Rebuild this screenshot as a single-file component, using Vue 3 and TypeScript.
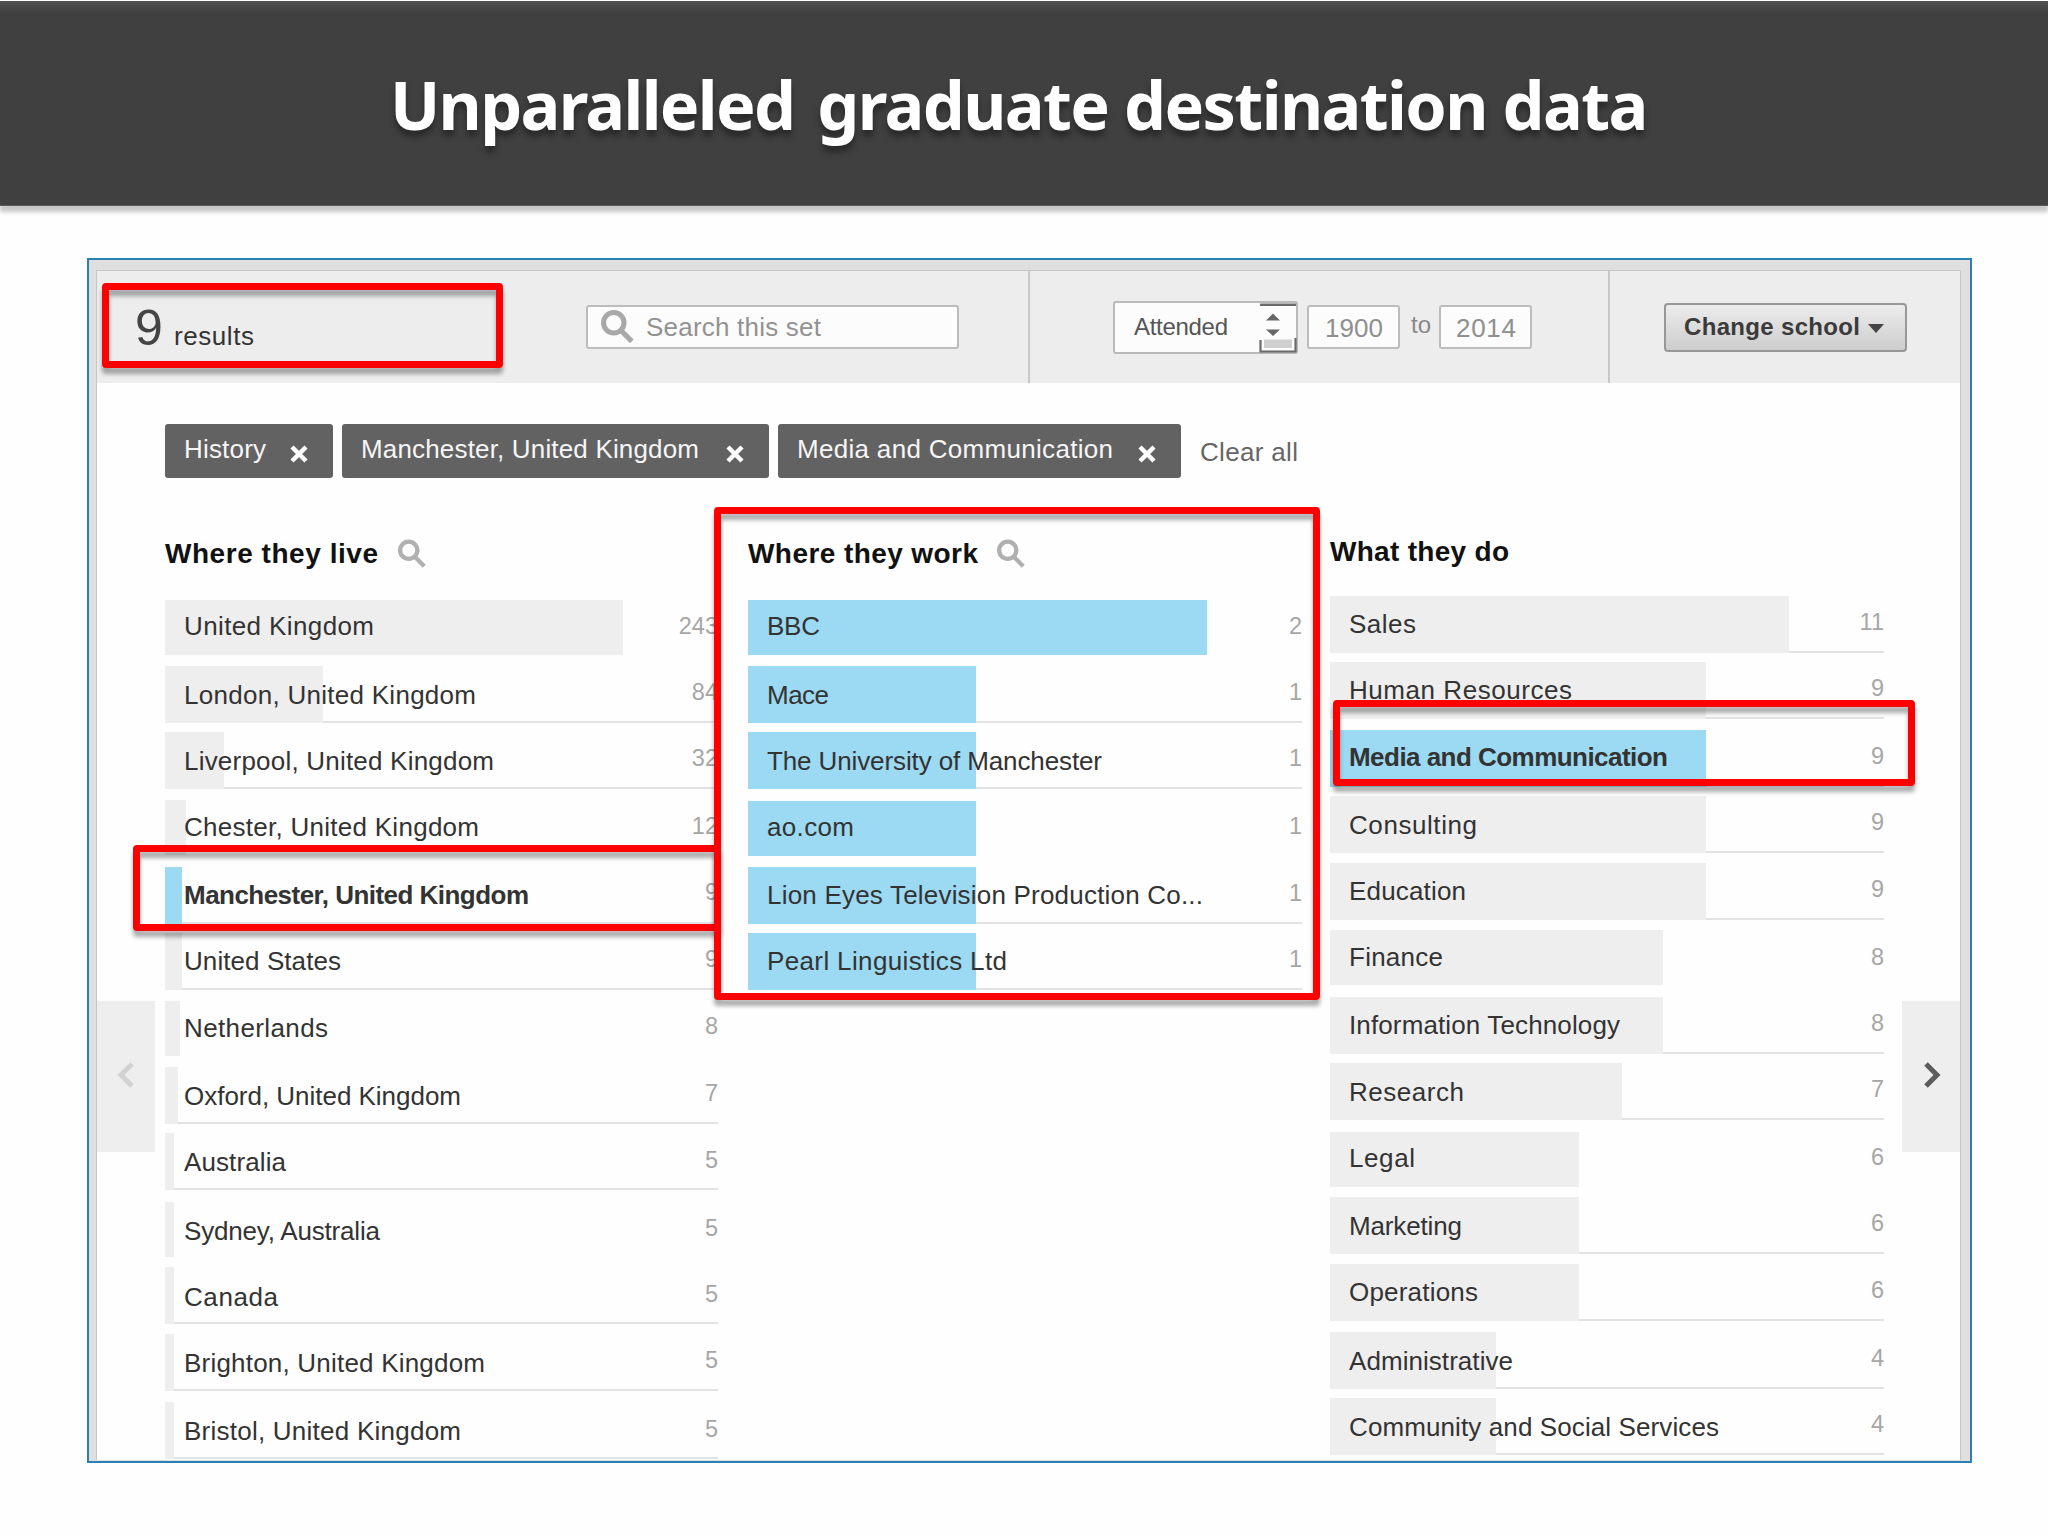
<script setup lang="ts">
interface Row {
  label: string
  textWidth: number
  count: number
  top: number
  bar: number
  base: number
  countBase: number
  line: boolean
  active?: boolean
}
interface Column {
  title: string
  titleWidth: number
  search: boolean
  titleBase: number
  start: number
  blue: boolean
  rows: Row[]
}

const r = (
  label: string, textWidth: number, count: number, top: number, bar: number,
  base: number, countBase: number, line = true, active = false,
): Row => ({ label, textWidth, count, top, bar, base, countBase, line, active })

const columns: Column[] = [
  {
    title: 'Where they live', titleWidth: 213, search: true, titleBase: 564, start: 600, blue: false,
    rows: [
      r('United Kingdom', 192, 243, 600, 458, 635.6, 634, false),
      r('London, United Kingdom', 294, 84, 666, 158, 704, 699.5),
      r('Liverpool, United Kingdom', 312, 32, 732, 59, 770, 766),
      r('Chester, United Kingdom', 297, 12, 800, 21, 836.6, 834, false),
      r('Manchester, United Kingdom', 347, 9, 867, 17, 904.6, 900, true, true),
      r('United States', 159, 9, 933, 17, 970.6, 967),
      r('Netherlands', 146, 8, 1001, 15, 1037, 1034, false),
      r('Oxford, United Kingdom', 279, 7, 1067, 12.5, 1105.5, 1101),
      r('Australia', 104, 5, 1133, 8.5, 1171.5, 1167.5),
      r('Sydney, Australia', 198, 5, 1202, 8.5, 1240, 1236, false),
      r('Canada', 96, 5, 1267, 8.5, 1306, 1302),
      r('Brighton, United Kingdom', 303, 5, 1334, 8.5, 1372.5, 1368),
      r('Bristol, United Kingdom', 279, 5, 1402, 8.5, 1440.5, 1437),
    ],
  },
  {
    title: 'Where they work', titleWidth: 230, search: true, titleBase: 564, start: 600, blue: true,
    rows: [
      r('BBC', 55, 2, 600, 459, 635.6, 634, false),
      r('Mace', 64, 1, 666, 228, 704, 700),
      r('The University of Manchester', 337, 1, 732, 228, 770, 766),
      r('ao.com', 89, 1, 801, 228, 836, 834, false),
      r('Lion Eyes Television Production Co...', 438, 1, 867, 228, 904.6, 901),
      r('Pearl Linguistics Ltd', 242, 1, 933, 228, 970.6, 967),
    ],
  },
  {
    title: 'What they do', titleWidth: 179, search: false, titleBase: 562, start: 596, blue: false,
    rows: [
      r('Sales', 69, 11, 596, 459, 633.6, 629.5),
      r('Human Resources', 225, 9, 662, 376, 699.6, 695.5),
      r('Media and Communication', 321, 9, 730, 376, 766, 764, true, true),
      r('Consulting', 130, 9, 796, 376, 834, 830),
      r('Education', 119, 9, 863, 376, 900, 896.5),
      r('Finance', 96, 8, 930, 333, 966, 964.5, false),
      r('Information Technology', 273, 8, 996.5, 333, 1034, 1030.6),
      r('Research', 117, 7, 1063, 292, 1101, 1097),
      r('Legal', 68, 6, 1131.5, 249, 1167, 1165, false),
      r('Marketing', 115, 6, 1197, 249, 1235.6, 1231),
      r('Operations', 131, 6, 1264, 249, 1301.7, 1297.5),
      r('Administrative', 166, 4, 1332, 166, 1370, 1366),
      r('Community and Social Services', 372, 4, 1398, 166, 1436, 1431.5),
    ],
  },
]

const chips = [
  { label: 'History', width: 168, text: 82 },
  { label: 'Manchester, United Kingdom', width: 427, text: 338 },
  { label: 'Media and Communication', width: 403, text: 316 },
]

const rowHeight = (c: Column, i: number) =>
  i + 1 < c.rows.length ? c.rows[i + 1].top - c.rows[i].top : 59

// Spaces the letters so that the text fills the given width.
const vFit = {
  mounted(el: HTMLElement, binding: { value: number }) {
    const n = (el.textContent ?? '').trim().length
    const natural = el.getBoundingClientRect().width
    if (n > 1) el.style.letterSpacing = `${(binding.value - natural) / (n - 1)}px`
  },
}
</script>

<template>
  <div class="slide">
    <header class="banner">
      <h1><span v-fit="406">Unparalleled</span><span v-fit="831">graduate destination data</span></h1>
    </header>

    <section class="frame">
      <div class="panel">
        <div class="toolbar">
          <div class="cell results">
            <span class="nine">9</span><span v-fit="80" class="word">results</span>
            <div class="search">
              <svg class="lens" viewBox="0 0 32 32"><circle cx="12.5" cy="12" r="9.6" /><path d="M19 19 L29.5 29.5" /></svg>
              <span v-fit="175">Search this set</span>
            </div>
          </div>
          <div class="cell dates">
            <div class="select">
              <span v-fit="94">Attended</span>
              <svg class="stepper" viewBox="0 0 38 52">
                <path d="M1 2.7H37" stroke="#6b6b6b" stroke-width="2.6" />
                <path d="M7 18.500 L14 11.500 L21 18.500Z M7 27.500 L14 34 L21 27.500Z" fill="#666" />
                <rect x="5" y="37.500" width="28" height="8.500" fill="#cfcfcf" />
                <path d="M1.500 38V49.500H36.500V36" fill="none" stroke="#6b6b6b" stroke-width="2.200" />
              </svg>
            </div>
            <div class="year"><span v-fit="58">1900</span></div>
            <span class="to">to</span>
            <div class="year late"><span v-fit="60">2014</span></div>
          </div>
          <div class="cell school">
            <button class="change"><span v-fit="176">Change school</span><i class="caret"></i></button>
          </div>
        </div>

        <div class="chips">
          <div v-for="c in chips" :key="c.label" class="chip" :style="{ width: c.width + 'px' }">
            <span v-fit="c.text" class="chip-text">{{ c.label }}</span>
            <svg class="cross" viewBox="0 0 20 18"><path d="M3 2 L17 16 M17 2 L3 16" /></svg>
          </div>
          <span v-fit="98" class="clear">Clear all</span>
        </div>

        <div class="body">
          <div class="nav">
            <svg viewBox="0 0 20 28"><path d="M16 3 L5 14 L16 25" stroke="#d2d2d2" /></svg>
          </div>
          <div class="columns">
            <div v-for="c in columns" :key="c.title" class="column" :class="{ blue: c.blue }">
              <div class="heading" :style="{ height: c.start - 478 + 'px', paddingTop: c.titleBase - 478 - 25.7 + 'px' }">
                <span v-fit="c.titleWidth">{{ c.title }}</span>
                <svg v-if="c.search" class="lens small" viewBox="0 0 32 32"><circle cx="12.5" cy="12" r="9.2" /><path d="M18.5 18.5 L29 29" /></svg>
              </div>
              <div
                v-for="(row, i) in c.rows"
                :key="row.label"
                class="row"
                :class="{ active: row.active }"
                :style="{ height: rowHeight(c, i) + 'px' }"
              >
                <div class="track" :class="{ line: row.line }">
                  <div class="bar" :style="{ width: row.bar + 'px' }"></div>
                </div>
                <div class="label" :style="{ paddingTop: row.base - row.top - 24.3 + 'px' }">
                  <span v-fit="row.textWidth - 2">{{ row.label }}</span>
                </div>
                <div class="count" :style="{ paddingTop: row.countBase - row.top - 23 + 'px' }">{{ row.count }}</div>
              </div>
            </div>
          </div>
          <div class="nav">
            <svg viewBox="0 0 20 28"><path d="M5 3 L16 14 L5 25" stroke="#5c5c5c" /></svg>
          </div>
        </div>
      </div>
    </section>

    <div class="mark mark-results"></div>
    <div class="mark mark-live"></div>
    <div class="mark mark-work"></div>
    <div class="mark mark-do"></div>
  </div>
</template>

<style>
body {
  margin: 0;
  background: #fefefe;
}
</style>

<style scoped>
.slide {
  position: relative;
  width: 2048px;
  height: 1536px;
  overflow: hidden;
  background: #fefefe;
  font-family: "Liberation Sans", Arial, sans-serif;
  font-size: 26px;
  line-height: 30px;
  color: #333;
}
.slide * {
  box-sizing: border-box;
}
.slide span {
  display: inline-block;
  white-space: nowrap;
}
.banner {
  height: 205px;
  margin-top: 1px;
  background: linear-gradient(#505250, #474747 6px, #404040 14px);
  border-bottom: 1px solid #5a5a5a;
  box-shadow: 0 6px 4px rgba(0, 0, 0, 0.22);
  display: flex;
  padding-left: 390px;
}
h1 {
  display: flex;
  gap: 23px;
  margin: 57px 0 0;
  font: bold 66.5px/92px "Noto Sans", "Open Sans", sans-serif;
  color: #fff;
  text-shadow: 0 6px 6px rgba(0, 0, 0, 0.4);
}
.frame {
  margin: 52px 0 0 87px;
  width: 1885px;
  height: 1205px;
  border: 2.500px solid #2a7fb4;
  background: #dfdfdf;
  padding: 10px 9px 0 7px;
}
.panel {
  height: 1190px;
  width: 1865px;
  overflow: hidden;
  background: #fefefe;
  border: solid #c6c6c6;
  border-width: 1px 1px 0;
}
.toolbar {
  height: 112px;
  display: flex;
  background: #eeedee;
}
.cell {
  display: flex;
  align-items: flex-start;
}
.results {
  width: 931px;
}
.nine {
  font-size: 50px;
  line-height: 56px;
  margin: 29px 0 0 38px;
  width: 38px;
  color: #444;
}
.word {
  margin: 50px 0 0 1px;
}
.search {
  display: flex;
  align-items: center;
  width: 373px;
  height: 44px;
  margin: 34px 69px 0 auto;
  padding-left: 12px;
  background: #fcfcfc;
  border: 2px solid #bcbcbc;
  border-radius: 3px;
  color: #929292;
}
.lens {
  width: 35px;
  height: 34px;
  margin-right: 11px;
  fill: none;
  stroke: #a8a8a8;
  stroke-width: 4.800;
}
.lens.small {
  width: 30px;
  height: 30px;
  margin: 1px 0 0 18px;
  stroke: #b0b0b0;
  stroke-width: 4.600;
}
.dates {
  width: 580px;
  border-left: 2px solid #c8c8c8;
  padding-left: 83px;
}
.select {
  display: flex;
  justify-content: space-between;
  width: 185px;
  height: 53px;
  margin-top: 30px;
  background: #fcfcfd;
  border: 2px solid #bababa;
  border-radius: 3px;
  font-size: 24px;
  padding: 9px 0 0 19px;
  color: #555;
}
.stepper {
  width: 38px;
  height: 52px;
  margin: -10px -1px 0 0;
}
.year {
  width: 93px;
  height: 44px;
  margin: 34px 0 0 9px;
  padding: 6px 0 0 16px;
  border: 2px solid #bcbcbc;
  border-radius: 3px;
  background: #fcfcfc;
  color: #8f8f8f;
}
.year.late {
  padding-left: 15px;
}
.to {
  margin: 39px 0 0 11px;
  width: 19px;
  font-size: 24px;
  color: #888;
}
.school {
  border-left: 2px solid #c8c8c8;
  flex: 1;
  padding-left: 54px;
}
.change {
  display: flex;
  align-items: center;
  width: 243px;
  height: 49px;
  margin: 32px 0 0;
  padding: 0 0 2px 18px;
  border: 2px solid #979797;
  border-radius: 4px;
  background: linear-gradient(#ececec, #cdcdcd);
  font: bold 24px/30px "Liberation Sans", Arial, sans-serif;
  color: #3a3a3a;
}
.caret {
  margin: 3px 0 0 8px;
  border: solid transparent;
  border-width: 9px 8px 0;
  border-top-color: #444;
}
.chips {
  display: flex;
  gap: 9px;
  height: 95px;
  padding: 41px 0 0 68px;
}
.chip {
  display: flex;
  height: 54px;
  border-radius: 3px;
  background: #636263;
  color: #f6f6f6;
}
.chip-text {
  margin: 10px 0 0 19px;
}
.cross {
  width: 20px;
  height: 18px;
  margin: 21px 24px 0 auto;
  fill: none;
  stroke: #fff;
  stroke-width: 4.500;
}
.clear {
  margin: 13px 0 0 10px;
  color: #666;
}
.body {
  display: flex;
}
.nav {
  flex: none;
  width: 58px;
  height: 151px;
  margin-top: 523px;
  background: #efeeef;
  display: flex;
  align-items: center;
  justify-content: center;
}
.nav svg {
  width: 20px;
  height: 28px;
  margin-top: -4px;
  fill: none;
  stroke-width: 5;
}
.columns {
  display: flex;
  gap: 28px;
  width: 1747px;
  padding-left: 10px;
}
.column {
  width: 554px;
  flex: none;
}
.column:first-child {
  width: 553px;
  margin-right: 2px;
}
.heading {
  display: flex;
  align-items: flex-start;
  font-weight: bold;
  font-size: 28px;
  line-height: 32px;
  color: #111;
}
.row {
  display: grid;
  grid-template-columns: 1fr auto;
}
.track {
  grid-area: 1 / 1 / 2 / 3;
  height: 55px;
}
.track.line {
  height: 57px;
  border-bottom: 2px solid #e2e1e3;
}
.bar {
  height: 55px;
  background: #efeeef;
}
.line .bar {
  height: 57px;
}
.blue .bar,
.active .bar {
  background: #9cd9f2;
}
.label {
  grid-area: 1 / 1 / 2 / 2;
  padding-left: 19px;
}
.active .label {
  font-weight: bold;
}
.count {
  grid-area: 1 / 2 / 2 / 3;
  font-size: 23.500px;
  color: #a6a6a6;
}
.mark {
  position: absolute;
  border: 7px solid #fe0000;
  border-radius: 4px;
  filter: drop-shadow(0 6px 2px rgba(0, 0, 0, 0.32));
}
.mark-results {
  left: 102px;
  top: 283px;
  width: 401px;
  height: 85px;
}
.mark-live {
  left: 133px;
  top: 845px;
  width: 588px;
  height: 86px;
}
.mark-work {
  left: 714px;
  top: 507px;
  width: 606px;
  height: 493px;
}
.mark-do {
  left: 1333px;
  top: 700px;
  width: 582px;
  height: 86px;
}
</style>
